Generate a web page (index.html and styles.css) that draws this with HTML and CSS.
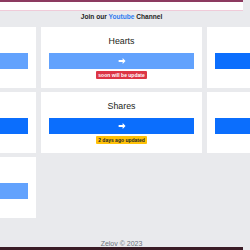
FILE: index.html
```html
<!DOCTYPE html>
<html lang="en">
<head>
<meta charset="utf-8">
<title>Stats</title>
<link rel="stylesheet" href="styles.css">
</head>
<body>
<div class="page">
  <div class="topbar"></div>
  <div class="join">Join our <span class="yt">Youtube</span> Channel</div>
  <div class="grid">
    <div class="card">
      <div class="title">Likes</div>
      <div class="btn light"><svg viewBox="0 0 10 10" class="arrow"><path d="M0.8 3.9h5V1.2L9.4 5 5.8 8.8V6.1h-5z" fill="#fff"/></svg></div>
      <div class="status"></div>
    </div>
    <div class="card">
      <div class="title">Hearts</div>
      <div class="btn light"><svg viewBox="0 0 10 10" class="arrow"><path d="M0.8 3.9h5V1.2L9.4 5 5.8 8.8V6.1h-5z" fill="#fff"/></svg></div>
      <div class="status"><span class="badge red">soon will be update</span></div>
    </div>
    <div class="card">
      <div class="title">Views</div>
      <div class="btn"><svg viewBox="0 0 10 10" class="arrow"><path d="M0.8 3.9h5V1.2L9.4 5 5.8 8.8V6.1h-5z" fill="#fff"/></svg></div>
      <div class="status"></div>
    </div>
    <div class="card">
      <div class="title">Posts</div>
      <div class="btn"><svg viewBox="0 0 10 10" class="arrow"><path d="M0.8 3.9h5V1.2L9.4 5 5.8 8.8V6.1h-5z" fill="#fff"/></svg></div>
      <div class="status"></div>
    </div>
    <div class="card">
      <div class="title">Shares</div>
      <div class="btn"><svg viewBox="0 0 10 10" class="arrow"><path d="M0.8 3.9h5V1.2L9.4 5 5.8 8.8V6.1h-5z" fill="#fff"/></svg></div>
      <div class="status"><span class="badge yellow">2 days ago updated</span></div>
    </div>
    <div class="card">
      <div class="title">Fans</div>
      <div class="btn"><svg viewBox="0 0 10 10" class="arrow"><path d="M0.8 3.9h5V1.2L9.4 5 5.8 8.8V6.1h-5z" fill="#fff"/></svg></div>
      <div class="status"></div>
    </div>
    <div class="card">
      <div class="title">Saves</div>
      <div class="btn light"><svg viewBox="0 0 10 10" class="arrow"><path d="M0.8 3.9h5V1.2L9.4 5 5.8 8.8V6.1h-5z" fill="#fff"/></svg></div>
      <div class="status"></div>
    </div>
  </div>
  <div class="footer">Zelov © 2023</div>
  <div class="bottombar"></div>
</div>
</body>
</html>
```
FILE: styles.css
```css
html, body {
  margin: 0;
  padding: 0;
  overflow: hidden;
  background: #e9eaed;
  font-family: "Liberation Sans", Arial, sans-serif;
}
.page {
  width: 243px;
}
.topbar {
  height: 8px;
  background: #fff;
  border-top: 2px solid #8c3a60;
  border-bottom: 1px solid #f0cbd9;
}
.join {
  height: 16px;
  line-height: 12px;
  text-align: center;
  font-size: 6.6px;
  font-weight: bold;
  color: #222;
}
.yt {
  color: #2f7cf0;
}
.grid {
  display: grid;
  grid-template-columns: repeat(3, 161px);
  justify-content: center;
  column-gap: 5px;
  row-gap: 4px;
}
.card {
  background: #fff;
  padding: 8px 8px 9px;
  display: flex;
  flex-direction: column;
  align-items: center;
}
.title {
  font-size: 8.8px;
  line-height: 13px;
  color: #1a1d20;
  margin-bottom: 5px;
}
.btn {
  align-self: stretch;
  height: 16px;
  background: #0b6efd;
  display: flex;
  align-items: center;
  justify-content: center;
}
.btn.light {
  background: #62a2fd;
}
.arrow {
  width: 8px;
  height: 8px;
}
.status {
  margin-top: 2px;
  height: 8px;
  display: flex;
  justify-content: center;
}
.badge {
  font-size: 5px;
  font-weight: bold;
  line-height: 8px;
  padding: 0 2.5px;
  border-radius: 1px;
}
.badge.red {
  background: #dc3545;
  color: #fff;
}
.badge.yellow {
  background: #ffc107;
  color: #212529;
}
.footer {
  margin-top: 21px;
  height: 8px;
  line-height: 9px;
  font-size: 7px;
  text-align: center;
  color: #6c757d;
}
.bottombar {
  height: 10px;
  background: #3a1c26;
}
```
